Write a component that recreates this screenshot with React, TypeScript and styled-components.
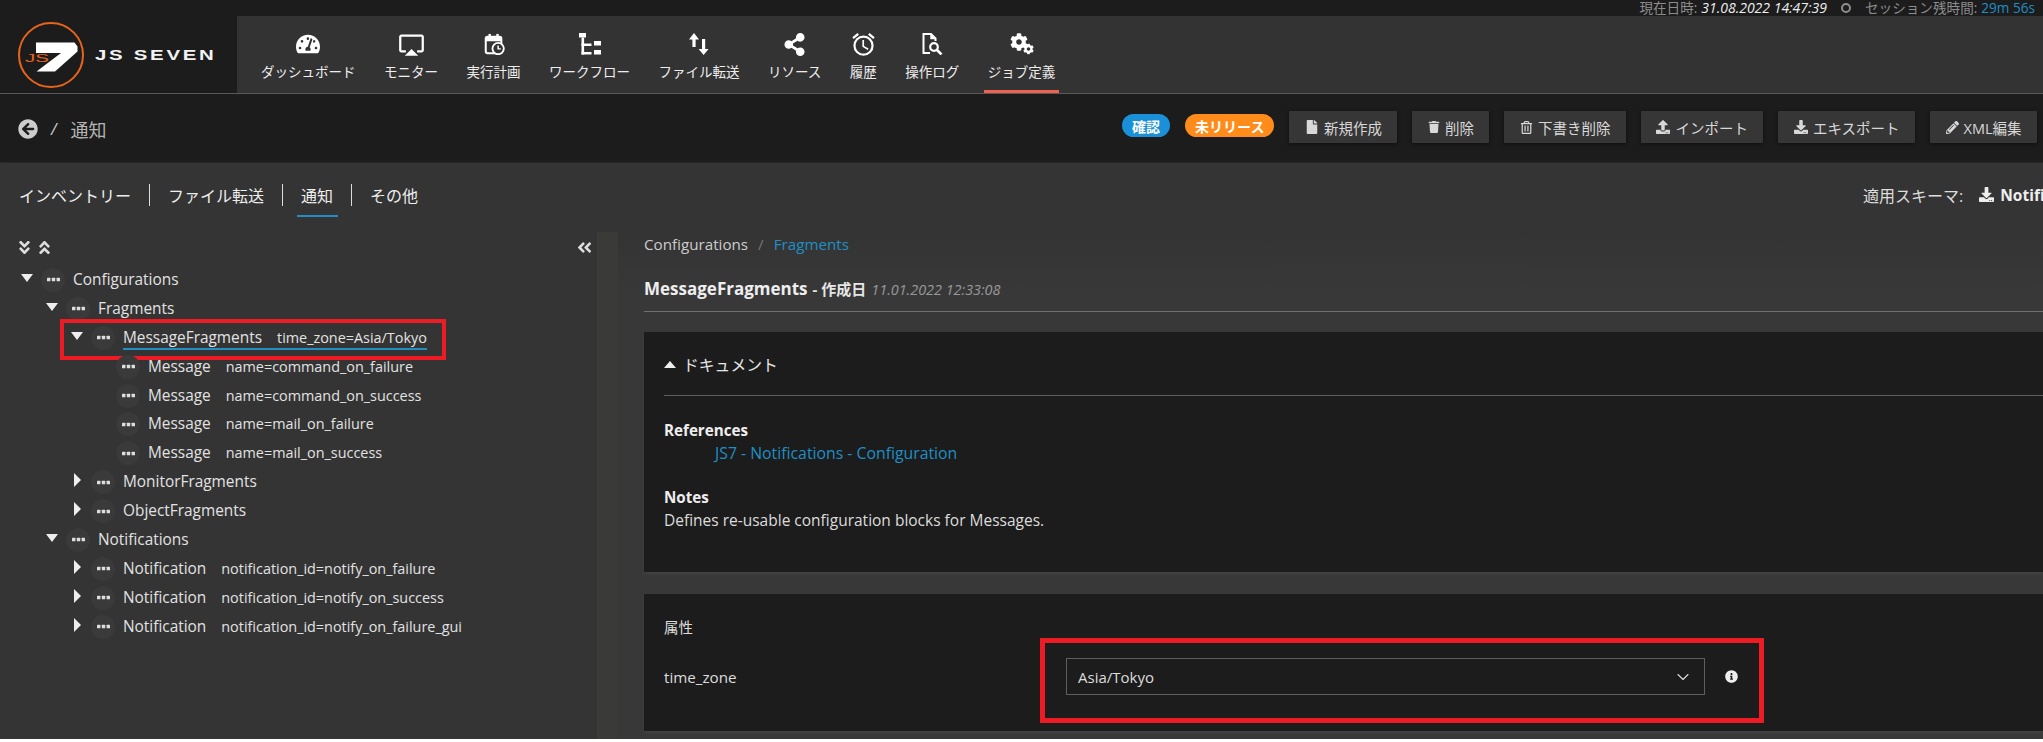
import React from 'react';
import styled, { createGlobalStyle } from 'styled-components';
import {
  FaTachometerAlt,
  FaShareAlt,
  FaCog,
  FaAngleDoubleDown,
  FaAngleDoubleUp,
  FaAngleDoubleLeft,
  FaArrowCircleLeft,
  FaFile,
  FaTrash,
  FaRegTrashAlt,
  FaUpload,
  FaDownload,
  FaPencilAlt,
  FaInfoCircle,
} from 'react-icons/fa';
import { MdAirplay, MdOutlineAlarm } from 'react-icons/md';
import { FiChevronDown } from 'react-icons/fi';

const SANS = `"Open Sans", "Noto Sans CJK JP", sans-serif`;
const BLUE = '#1f8fc4';
const RED = '#ed1c24';

const GlobalStyle = createGlobalStyle`
  html, body {
    margin: 0;
    background: #fff;
  }
  body {
    font-family: ${SANS};
    font-size: 14px;
    color: #ddd;
  }
`;

function ScheduleIcon() {
  return (
    <svg width="22" height="22" viewBox="0 0 24 24">
      <rect x="3" y="4" width="17" height="18" rx="2" fill="none" stroke="#fff" strokeWidth="2.2" />
      <rect x="3" y="4" width="17" height="5" fill="#fff" />
      <rect x="6" y="1" width="2.6" height="4" fill="#fff" />
      <rect x="14.5" y="1" width="2.6" height="4" fill="#fff" />
      <circle cx="16.5" cy="17" r="6.2" fill="#333" stroke="#fff" strokeWidth="2" />
      <path d="M16.5 13.5v3.8h3" fill="none" stroke="#fff" strokeWidth="1.6" />
    </svg>
  );
}

function WorkflowIcon() {
  return (
    <svg width="22" height="22" viewBox="0 0 22 22" fill="#fff">
      <rect x="0" y="0" width="7" height="4.5" />
      <rect x="2.5" y="4.5" width="2.6" height="17" />
      <rect x="2.5" y="10.5" width="10" height="2.5" />
      <rect x="2.5" y="19" width="10" height="2.5" />
      <rect x="15" y="8" width="7" height="4.5" />
      <rect x="15" y="17" width="7" height="4.5" />
    </svg>
  );
}

function TransferIcon() {
  return (
    <svg width="20" height="22" viewBox="0 0 20 22" fill="#fff">
      <path d="M0 6.5 5 0l5 6.5H6.6V14H3.4V6.5z" />
      <path d="M13 6h3.2v10h3.4l-5 6-5-6H13z" />
    </svg>
  );
}

function AuditLogIcon() {
  return (
    <svg width="21" height="22" viewBox="0 0 21 22" fill="none" stroke="#fff">
      <path d="M8 20H1.5V1H9l4.5 4.5V8" strokeWidth="2" />
      <path d="M8.5 1v5H14z" fill="#fff" strokeWidth="0.5" />
      <circle cx="12" cy="14" r="3.8" strokeWidth="2.2" />
      <path d="M15 17l4.5 4.5" strokeWidth="2.6" />
    </svg>
  );
}

function GearsIcon() {
  return (
    <svg width="26" height="22" viewBox="0 0 26 22" fill="#fff">
      <FaCog size={18} x={1} y={0} />
      <FaCog size={11} x={14} y={10.5} />
    </svg>
  );
}

function Logo() {
  return (
    <svg width="68" height="68" viewBox="0 0 68 68">
      <circle cx="34" cy="34" r="32" fill="none" stroke="#e8641b" strokeWidth="2" />
      <path d="M19 21.5h38.5l3 4v5L38 50.5H19.5l24.5-18.5H19z" fill="#fff" />
      <text
        x="8"
        y="40.5"
        fill="#e8641b"
        fontSize="11.5"
        fontFamily="Liberation Sans, sans-serif"
        textLength="24"
        lengthAdjust="spacingAndGlyphs"
      >
        JS
      </text>
    </svg>
  );
}

function DotsIcon() {
  return (
    <svg width="13" height="5" viewBox="0 0 13 5" fill="#dedede">
      <rect x="0" y="0.7" width="3.4" height="3.6" rx="0.6" />
      <rect x="4.8" y="0.7" width="3.4" height="3.6" rx="0.6" />
      <rect x="9.6" y="0.7" width="3.4" height="3.6" rx="0.6" />
    </svg>
  );
}

const NAV_ITEMS = [
  { label: 'ダッシュボード', icon: <FaTachometerAlt size={24} /> },
  { label: 'モニター', icon: <MdAirplay size={27} /> },
  { label: '実行計画', icon: <ScheduleIcon /> },
  { label: 'ワークフロー', icon: <WorkflowIcon /> },
  { label: 'ファイル転送', icon: <TransferIcon /> },
  { label: 'リソース', icon: <FaShareAlt size={23} /> },
  { label: '履歴', icon: <MdOutlineAlarm size={27} /> },
  { label: '操作ログ', icon: <AuditLogIcon /> },
  { label: 'ジョブ定義', icon: <GearsIcon />, active: true },
];

const ACTIONS = [
  { label: '新規作成', icon: <FaFile size={14} /> },
  { label: '削除', icon: <FaTrash size={12} /> },
  { label: '下書き削除', icon: <FaRegTrashAlt size={13} /> },
  { label: 'インポート', icon: <FaUpload size={14} /> },
  { label: 'エキスポート', icon: <FaDownload size={14} /> },
  { label: 'XML編集', icon: <FaPencilAlt size={13} /> },
];

const TABS = [
  { label: 'インベントリー' },
  { label: 'ファイル転送' },
  { label: '通知', active: true },
  { label: 'その他' },
];

type TreeNode = {
  depth: number;
  caret?: 'down' | 'right';
  name: string;
  attr?: string;
  selected?: boolean;
};

const TREE: TreeNode[] = [
  { depth: 0, caret: 'down', name: 'Configurations' },
  { depth: 1, caret: 'down', name: 'Fragments' },
  { depth: 2, caret: 'down', name: 'MessageFragments', attr: 'time_zone=Asia/Tokyo', selected: true },
  { depth: 3, name: 'Message', attr: 'name=command_on_failure' },
  { depth: 3, name: 'Message', attr: 'name=command_on_success' },
  { depth: 3, name: 'Message', attr: 'name=mail_on_failure' },
  { depth: 3, name: 'Message', attr: 'name=mail_on_success' },
  { depth: 2, caret: 'right', name: 'MonitorFragments' },
  { depth: 2, caret: 'right', name: 'ObjectFragments' },
  { depth: 1, caret: 'down', name: 'Notifications' },
  { depth: 2, caret: 'right', name: 'Notification', attr: 'notification_id=notify_on_failure' },
  { depth: 2, caret: 'right', name: 'Notification', attr: 'notification_id=notify_on_success' },
  { depth: 2, caret: 'right', name: 'Notification', attr: 'notification_id=notify_on_failure_gui' },
];

export default function App() {
  return (
    <Page lang="ja">
      <GlobalStyle />
      <TopBar>
        <span>現在日時:</span>
        <NowText>31.08.2022 14:47:39</NowText>
        <Ring />
        <span>セッション残時間:</span>
        <TimerText>29m 56s</TimerText>
      </TopBar>

      <NavBar>
        <Brand>
          <Logo />
          <BrandName>JS SEVEN</BrandName>
        </Brand>
        <NavList>
          {NAV_ITEMS.map((item) => (
            <NavItem key={item.label} $active={item.active}>
              <NavIcon>{item.icon}</NavIcon>
              <span>{item.label}</span>
            </NavItem>
          ))}
        </NavList>
      </NavBar>

      <SubHeader>
        <BackLink>
          <FaArrowCircleLeft size={20} />
          <Slash>/</Slash>
          <PageTitle>通知</PageTitle>
        </BackLink>
        <Actions>
          <Badge $color="#1a90d9">確認</Badge>
          <Badge $color="#ff8c1a">未リリース</Badge>
          {ACTIONS.map((action) => (
            <ActionButton key={action.label}>
              {action.icon}
              {action.label}
            </ActionButton>
          ))}
        </Actions>
      </SubHeader>

      <TabsRow>
        {TABS.map((tab) => (
          <Tab key={tab.label} $active={tab.active}>
            <span>{tab.label}</span>
          </Tab>
        ))}
        <Schema>
          適用スキーマ:
          <SchemaName>
            <FaDownload size={15} />
            Notifications
          </SchemaName>
        </Schema>
      </TabsRow>

      <Workspace>
        <Sidebar>
          <TreeTools>
            <ToolIcons>
              <FaAngleDoubleDown size={17} />
              <FaAngleDoubleUp size={17} />
            </ToolIcons>
            <FaAngleDoubleLeft size={17} />
          </TreeTools>
          {TREE.map((node, index) => (
            <TreeRow key={index} $depth={node.depth}>
              <CaretSlot>{node.caret && <Caret $dir={node.caret} />}</CaretSlot>
              <DotsBadge>
                <DotsIcon />
              </DotsBadge>
              <TreeLabel $selected={node.selected}>
                {node.name}
                {node.attr && <TreeAttr>{node.attr}</TreeAttr>}
              </TreeLabel>
              {node.selected && <TreeFrame />}
            </TreeRow>
          ))}
        </Sidebar>
        <Splitter />
        <Main>
          <Crumbs>
            Configurations
            <CrumbSlash>/</CrumbSlash>
            <CrumbLink>Fragments</CrumbLink>
          </Crumbs>
          <TitleRow>
            <TitleName>MessageFragments</TitleName>
            <TitleMeta>- 作成日</TitleMeta>
            <TitleDate>11.01.2022 12:33:08</TitleDate>
          </TitleRow>

          <DocPanel>
            <DocHead>
              <UpCaret />
              ドキュメント
            </DocHead>
            <DocBody>
              <Strong>References</Strong>
              <DocLink>JS7 - Notifications - Configuration</DocLink>
              <NotesTitle>Notes</NotesTitle>
              <div>Defines re-usable configuration blocks for Messages.</div>
            </DocBody>
          </DocPanel>

          <AttrPanel>
            <AttrTitle>属性</AttrTitle>
            <FieldRow>
              <FieldName>time_zone</FieldName>
              <SelectBox>
                Asia/Tokyo
                <FiChevronDown size={20} strokeWidth={1.3} />
              </SelectBox>
              <InfoIcon>
                <FaInfoCircle size={13} />
              </InfoIcon>
              <FieldFrame />
            </FieldRow>
          </AttrPanel>
        </Main>
      </Workspace>
    </Page>
  );
}

const Page = styled.div`
  width: 2043px;
  height: 739px;
  overflow: hidden;
  display: flex;
  flex-direction: column;
  background: #343434;
`;

const TopBar = styled.div`
  height: 16px;
  flex: none;
  display: flex;
  align-items: center;
  justify-content: flex-end;
  gap: 4px;
  padding-right: 8px;
  background: #1c1c1c;
  color: #8d8d8d;
  font-size: 13.6px;
  line-height: 16px;
`;

const NowText = styled.span`
  color: #eee;
  font-size: 14px;
  font-style: italic;
`;

const Ring = styled.span`
  width: 6px;
  height: 6px;
  margin: 0 10px;
  border: 2px solid #8d8d8d;
  border-radius: 50%;
`;

const TimerText = styled.span`
  color: ${BLUE};
`;

const NavBar = styled.div`
  height: 77px;
  flex: none;
  display: flex;
  background: #333;
  border-bottom: 1px solid #585858;
  box-sizing: content-box;
`;

const Brand = styled.div`
  width: 237px;
  flex: none;
  display: flex;
  align-items: center;
  gap: 10px;
  padding-left: 17px;
  box-sizing: border-box;
  background: #1c1c1c;
`;

const BrandName = styled.span`
  display: inline-block;
  font-family: 'Liberation Sans', sans-serif;
  font-size: 15px;
  font-weight: 700;
  letter-spacing: 2px;
  color: #f2f2f2;
  white-space: nowrap;
  transform: scaleX(1.36);
  transform-origin: left center;
`;

const NavList = styled.div`
  display: flex;
  gap: 28.5px;
  padding-left: 24px;
`;

const NavItem = styled.div<{ $active?: boolean }>`
  position: relative;
  display: flex;
  flex-direction: column;
  align-items: center;
  height: 77px;
  padding-top: 17px;
  box-sizing: border-box;
  color: #eee;
  font-size: 13.5px;
  line-height: 18px;
  white-space: nowrap;

  &::after {
    content: '';
    display: ${(p) => (p.$active ? 'block' : 'none')};
    position: absolute;
    left: -4px;
    right: -4px;
    bottom: 0;
    height: 3px;
    background: #f0614f;
  }
`;

const NavIcon = styled.div`
  height: 22px;
  margin-bottom: 8px;
  display: flex;
  align-items: center;
  justify-content: center;
  color: #fff;
`;

const SubHeader = styled.div`
  height: 69px;
  flex: none;
  display: flex;
  align-items: center;
  justify-content: space-between;
  padding: 0 6px 0 18px;
  background: #1c1c1c;
  box-shadow: inset 0 -2px 2px -1px #2a2a2a;
`;

const BackLink = styled.div`
  display: flex;
  align-items: center;
  color: #ccc;
`;

const Slash = styled.span`
  margin-left: 13px;
  font-size: 16px;
  font-style: italic;
`;

const PageTitle = styled.span`
  margin-left: 14px;
  font-size: 18px;
  color: #b5b5b5;
`;

const Actions = styled.div`
  display: flex;
  align-items: center;
  gap: 15px;
  padding-bottom: 3px;
`;

const Badge = styled.span<{ $color: string }>`
  height: 23px;
  margin-top: -3px;
  padding: 0 10px;
  display: flex;
  align-items: center;
  border-radius: 12px;
  background: ${(p) => p.$color};
  color: #fff;
  font-size: 14px;
  font-weight: 700;
`;

const ActionButton = styled.button`
  height: 32px;
  padding: 0 15.5px;
  display: flex;
  align-items: center;
  gap: 5px;
  border: 0;
  border-radius: 1px;
  background: #363636;
  color: #d8d8d8;
  font-family: ${SANS};
  font-size: 14.5px;
  box-shadow: 0 1px 4px rgba(0, 0, 0, 0.5);
`;

const TabsRow = styled.div`
  height: 69px;
  flex: none;
  display: flex;
  align-items: center;
  padding-left: 19px;
  padding-bottom: 6px;
  box-sizing: border-box;
`;

const Tab = styled.div<{ $active?: boolean }>`
  display: flex;
  align-items: center;
  height: 22px;
  font-size: 16px;
  color: #eee;
  white-space: nowrap;

  & + & {
    margin-left: 17.5px;
    padding-left: 18.5px;
    border-left: 1px solid #ddd;
  }

  span {
    position: relative;
  }

  span::after {
    content: '';
    display: ${(p) => (p.$active ? 'block' : 'none')};
    position: absolute;
    left: -4px;
    right: -5px;
    top: 32.5px;
    height: 2px;
    background: ${BLUE};
  }
`;

const Schema = styled.div`
  margin-left: auto;
  width: 180px;
  flex: none;
  display: flex;
  align-items: center;
  gap: 16px;
  overflow: hidden;
  white-space: nowrap;
  font-size: 16px;
  color: #ddd;
`;

const SchemaName = styled.span`
  display: flex;
  align-items: center;
  gap: 6px;
  font-size: 15.5px;
  font-weight: 700;
  color: #eee;
`;

const Workspace = styled.div`
  flex: 1;
  min-height: 0;
  display: flex;
`;

const Sidebar = styled.div`
  width: 597px;
  flex: none;
  padding-top: 4px;
  box-sizing: border-box;
`;

const TreeTools = styled.div`
  height: 22px;
  margin-bottom: 7.5px;
  padding: 0 4px 0 16px;
  display: flex;
  align-items: center;
  justify-content: space-between;
  color: #ddd;
`;

const ToolIcons = styled.div`
  display: flex;
  gap: 3px;
`;

const TreeRow = styled.div<{ $depth: number }>`
  position: relative;
  height: 28.9px;
  display: flex;
  align-items: center;
  padding-left: ${(p) => 20 + p.$depth * 25}px;
`;

const CaretSlot = styled.span`
  width: 14px;
  height: 14px;
  margin-right: 7px;
  margin-top: -4px;
  flex: none;
  display: flex;
  align-items: center;
  justify-content: center;
`;

const Caret = styled.span<{ $dir: 'down' | 'right' }>`
  width: 0;
  height: 0;
  ${(p) =>
    p.$dir === 'down'
      ? `border-left: 6px solid transparent;
         border-right: 6px solid transparent;
         border-top: 8px solid #eee;`
      : `border-top: 7px solid transparent;
         border-bottom: 7px solid transparent;
         border-left: 7px solid #eee;`}
`;

const DotsBadge = styled.span`
  width: 24px;
  height: 24px;
  margin-right: 8px;
  flex: none;
  display: flex;
  align-items: center;
  justify-content: center;
  border-radius: 50%;
  background: #3a3a3a;
`;

const TreeLabel = styled.span<{ $selected?: boolean }>`
  position: relative;
  font-size: 15.4px;
  line-height: 20px;
  color: #e2e2e2;
  white-space: nowrap;

  &::after {
    content: '';
    display: ${(p) => (p.$selected ? 'block' : 'none')};
    position: absolute;
    left: 0;
    right: 0;
    bottom: -2px;
    height: 2px;
    background: ${BLUE};
  }
`;

const TreeAttr = styled.span`
  margin-left: 15px;
  font-size: 14.4px;
`;

const TreeFrame = styled.div`
  position: absolute;
  left: 60px;
  top: -4px;
  width: 386px;
  height: 41px;
  box-sizing: border-box;
  border: 4px solid ${RED};
`;

const Splitter = styled.div`
  width: 21px;
  flex: none;
  background: #3a3a38;
`;

const Main = styled.div`
  flex: 1;
  min-width: 0;
  padding: 2px 0 0 26px;
  background: linear-gradient(#343434, #383838 60px);
`;

const Crumbs = styled.div`
  line-height: 20px;
  font-size: 15.2px;
  color: #ccc;
`;

const CrumbSlash = styled.span`
  margin: 0 10px;
  color: #777;
`;

const CrumbLink = styled.span`
  color: ${BLUE};
`;

const TitleRow = styled.div`
  height: 45px;
  margin-top: 13px;
  padding-top: 10px;
  display: flex;
  align-items: baseline;
  gap: 5px;
  box-sizing: border-box;
  border-bottom: 1px solid #707070;
  line-height: 24px;
`;

const TitleName = styled.span`
  font-size: 17px;
  font-weight: 700;
  color: #eee;
`;

const TitleMeta = styled.span`
  font-size: 15px;
  font-weight: 700;
  color: #e6e6e6;
`;

const TitleDate = styled.span`
  font-size: 14.4px;
  font-style: italic;
  color: #999;
`;

const DocPanel = styled.section`
  height: 240px;
  margin-top: 20px;
  padding: 23px 0 0 20px;
  box-sizing: border-box;
  background: #1c1c1c;
  box-shadow: 0 2px 3px rgba(255, 255, 255, 0.06);
`;

const DocHead = styled.div`
  display: flex;
  align-items: center;
  gap: 7px;
  height: 41px;
  padding-bottom: 21px;
  box-sizing: border-box;
  border-bottom: 1px solid #5c5c5c;
  font-size: 15.8px;
  line-height: 20px;
  color: #e6e6e6;
`;

const UpCaret = styled.span`
  width: 0;
  height: 0;
  border-left: 6px solid transparent;
  border-right: 6px solid transparent;
  border-bottom: 7px solid #eee;
`;

const DocBody = styled.div`
  padding-top: 24px;
  font-size: 15.5px;
  line-height: 20px;
  color: #ddd;
`;

const Strong = styled.div`
  font-size: 15.2px;
  font-weight: 700;
  color: #eee;
`;

const DocLink = styled.div`
  margin-top: 3px;
  padding-left: 51px;
  font-size: 15.8px;
  color: ${BLUE};
`;

const NotesTitle = styled(Strong)`
  margin-top: 24px;
  margin-bottom: 3px;
`;

const AttrPanel = styled.section`
  height: 137px;
  margin-top: 22px;
  padding: 24px 0 0 20px;
  box-sizing: border-box;
  background: #1c1c1c;
  box-shadow: 0 2px 3px rgba(255, 255, 255, 0.06);
`;

const AttrTitle = styled.div`
  margin-bottom: 20px;
  font-size: 14.5px;
  line-height: 20px;
  color: #ddd;
`;

const FieldRow = styled.div`
  position: relative;
  display: flex;
  align-items: center;
  height: 37px;
`;

const FieldName = styled.div`
  width: 402px;
  flex: none;
  font-size: 15.2px;
  color: #ddd;
`;

const SelectBox = styled.div`
  width: 639px;
  height: 37px;
  flex: none;
  display: flex;
  align-items: center;
  justify-content: space-between;
  padding: 0 11px 0 11px;
  box-sizing: border-box;
  border: 1px solid #5e5e5e;
  font-size: 15px;
  color: #ddd;
`;

const InfoIcon = styled.span`
  margin-left: 20px;
  display: flex;
  color: #eee;
`;

const FieldFrame = styled.div`
  position: absolute;
  left: 376px;
  top: -20px;
  width: 724px;
  height: 85px;
  box-sizing: border-box;
  border: 5px solid ${RED};
`;
